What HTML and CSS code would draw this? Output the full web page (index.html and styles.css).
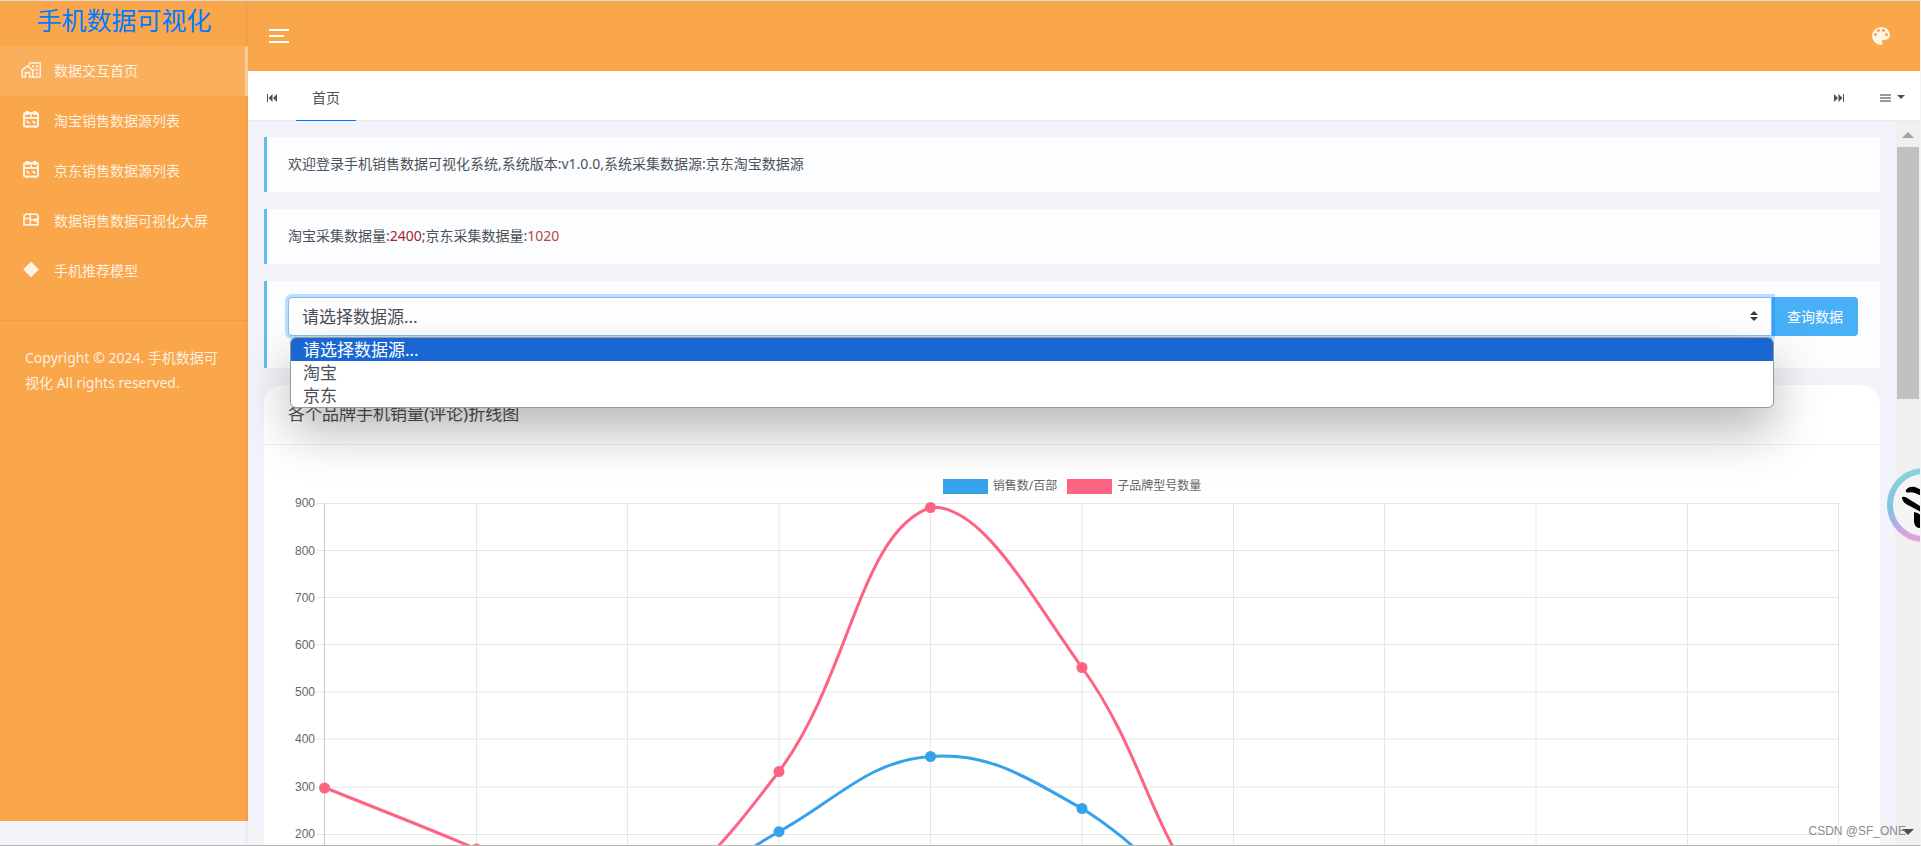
FILE: index.html
```html
<!DOCTYPE html>
<html lang="zh-CN">
<head>
<meta charset="utf-8">
<title>手机数据可视化</title>
<link rel="stylesheet" href="styles.css">
</head>
<body>
<div class="app">
  <aside class="sidebar">
    <a class="brand" href="#">手机数据可视化</a>
    <nav class="menu">
      <a class="menu-item active" href="#">
        <svg class="menu-icon" viewBox="0 0 20 20"><path d="M1.200 16V9.200L6.500 4.800l5.200 4.400V16H8.500v-4.500h-4V16z" fill="none" stroke="currentColor" stroke-width="1.600"/><path d="M8.500 4V2H19.200V16H12" fill="none" stroke="currentColor" stroke-width="1.500"/><path d="M11 4.200h2v2h-2zM14.800 4.200h2v2h-2zM14.800 7.800h2v2h-2zM14.800 11.400h2v2h-2zM12.500 7.800h1.200v2h-1.200z" fill="currentColor"/></svg>
        <span>数据交互首页</span>
      </a>
      <a class="menu-item" href="#">
        <svg class="menu-icon" viewBox="0 0 20 20"><rect x="3" y="2" width="14" height="13.500" rx="1.500" fill="none" stroke="currentColor" stroke-width="2"/><path d="M4.500 0h3.500v4H4.500zM12 0h3.500v4H12zM3 6h14v2H3zM9.200 2h1.600v5H9.200z" fill="currentColor"/><path d="M5.500 10l3 2.500M11.500 10l3 2.500M5 16h2.500M12.500 16H15" stroke="currentColor" stroke-width="1.700"/></svg>
        <span>淘宝销售数据源列表</span>
      </a>
      <a class="menu-item" href="#">
        <svg class="menu-icon" viewBox="0 0 20 20"><rect x="3" y="2" width="14" height="13.500" rx="1.500" fill="none" stroke="currentColor" stroke-width="2"/><path d="M4.500 0h3.500v4H4.500zM12 0h3.500v4H12zM3 6h14v2H3zM9.200 2h1.600v5H9.200z" fill="currentColor"/><path d="M5.500 10l3 2.500M11.500 10l3 2.500M5 16h2.500M12.500 16H15" stroke="currentColor" stroke-width="1.700"/></svg>
        <span>京东销售数据源列表</span>
      </a>
      <a class="menu-item" href="#">
        <svg class="menu-icon" viewBox="0 0 20 20"><path d="M4.800 3.200H15a2 2 0 0 1 2 2v8.600H3V5z" fill="none" stroke="currentColor" stroke-width="1.800"/><path d="M9.300 3v11M3 7.500h6M9.500 8.800h7.500" stroke="currentColor" stroke-width="1.500"/><path d="M12 8.500l3.500-1.500v5z" fill="currentColor"/></svg>
        <span>数据销售数据可视化大屏</span>
      </a>
      <a class="menu-item" href="#">
        <svg class="menu-icon" viewBox="0 0 20 20"><path d="M10 1.200L17.300 8.500 10 15.800 2.700 8.500z" fill="currentColor" stroke="currentColor" stroke-width="1" stroke-linejoin="round"/></svg>
        <span>手机推荐模型</span>
      </a>
    </nav>
    <p class="copyright">Copyright © 2024. 手机数据可视化 All rights reserved.</p>
  </aside>

  <div class="main">
    <header class="topbar">
      <button class="toggle" type="button" aria-label="菜单"><i></i><i class="short"></i><i></i></button>
      <button class="theme" type="button" aria-label="主题">
        <svg viewBox="3 3 18 18" width="18" height="18"><path fill="currentColor" d="M17.500 12a1.500 1.500 0 0 1-1.500-1.500A1.500 1.500 0 0 1 17.500 9a1.500 1.500 0 0 1 1.500 1.500 1.500 1.500 0 0 1-1.500 1.500m-3-4A1.500 1.500 0 0 1 13 6.500 1.500 1.500 0 0 1 14.500 5 1.500 1.500 0 0 1 16 6.500 1.500 1.500 0 0 1 14.500 8m-5 0A1.500 1.500 0 0 1 8 6.500 1.500 1.500 0 0 1 9.500 5 1.500 1.500 0 0 1 11 6.500 1.500 1.500 0 0 1 9.500 8m-3 4A1.500 1.500 0 0 1 5 10.500 1.500 1.500 0 0 1 6.500 9 1.500 1.500 0 0 1 8 10.500 1.500 1.500 0 0 1 6.500 12M12 3a9 9 0 0 0 0 18 1.500 1.500 0 0 0 1.500-1.500c0-.390-.150-.740-.390-1-.230-.270-.380-.620-.380-1a1.500 1.500 0 0 1 1.500-1.500H16a5 5 0 0 0 5-5c0-4.420-4.030-8-9-8z"/></svg>
      </button>
    </header>

    <div class="tabs">
      <button class="tab-btn" type="button" aria-label="向左"><svg width="10" height="8" viewBox="0 0 10 8"><path d="M0 0h1v8H0zM5.500 0v8L1.500 4zM10 0v8L6 4z" fill="currentColor"/></svg></button>
      <a class="tab" href="#">首页</a>
      <div class="tabs-right">
        <button class="tab-btn" type="button" aria-label="向右"><svg width="10" height="8" viewBox="0 0 10 8"><path d="M9 0h1v8H9zM4.500 0v8l4-4zM0 0v8l4-4z" fill="currentColor"/></svg></button>
        <button class="tab-btn more" type="button" aria-label="更多"><svg width="25" height="8" viewBox="0 0 25 8"><path d="M0 0h11v2H0zM0 3h11v2H0zM0 6h11v2H0z" fill="#989ba1"/><path d="M17 1h8l-4 4z" fill="currentColor"/></svg></button>
      </div>
    </div>

    <div class="viewport">
      <main class="content">
        <section class="quote">欢迎登录手机销售数据可视化系统,系统版本:v1.0.0,系统采集数据源:京东淘宝数据源</section>
        <section class="quote">淘宝采集数据量:<span class="num-a">2400</span>;京东采集数据量:<span class="num-b">1020</span></section>
        <section class="quote query">
          <form class="query-form">
            <div class="select-wrap">
              <select class="source" aria-label="数据源">
                <option>请选择数据源...</option>
                <option>淘宝</option>
                <option>京东</option>
              </select>
              <svg class="caret" width="8" height="10" viewBox="0 0 8 10"><path d="M0 4l4-4 4 4zM0 6h8l-4 4z" fill="#343a40"/></svg>
              <ul class="popup">
                <li class="chosen">请选择数据源...</li>
                <li>淘宝</li>
                <li>京东</li>
              </ul>
            </div>
            <button class="submit" type="button">查询数据</button>
          </form>
        </section>

        <section class="card">
          <h2 class="card-title">各个品牌手机销量(评论)折线图</h2>
          <div class="legend">
            <span class="key"><i class="swatch blue"></i>销售数/百部</span>
            <span class="key"><i class="swatch pink"></i>子品牌型号数量</span>
          </div>
          <svg class="chart" viewBox="264 495 1616 440">
            <path class="grid" d="M316 503.500H1839M316 550.500H1839M316 597.500H1839M316 644.500H1839M316 692H1839M316 739H1839M316 787H1839M316 834.500H1839M316 881.500H1839M316 929H1839"/>
            <path class="grid" d="M476.500 503V929M627.500 503V929M779 503V929M930.500 503V929M1082 503V929M1233.500 503V929M1384.500 503V929M1536 503V929M1687.500 503V929M1838.500 503V929"/>
            <path class="axis" d="M324.500 503V929"/>
            <g class="ticks">
              <text x="315" y="507">900</text><text x="315" y="555">800</text><text x="315" y="602">700</text>
              <text x="315" y="649">600</text><text x="315" y="696">500</text><text x="315" y="743">400</text>
              <text x="315" y="791">300</text><text x="315" y="838">200</text><text x="315" y="886">100</text>
            </g>
            <path class="line blue" d="M628 925C660 915 717 866 779 831.700C838 799 868 761 930.500 756.500C990 752 1027 778 1082 808.500C1146 848 1175 895 1233.500 925"/>
            <g class="dots blue"><circle cx="779" cy="831.700" r="5.500"/><circle cx="930.500" cy="756.500" r="5.500"/><circle cx="1082" cy="808.500" r="5.500"/></g>
            <path class="line pink" d="M324.500 787.500L416 824Q446 836 476.500 849C537 870 574 920 628 905C692 888 728 837 779 771.500C850.700 674.500 860 531.600 930.500 507.500C981.500 503.300 1030 595 1082 667.500C1151 763 1153 856 1233.500 925"/>
            <g class="dots pink"><circle cx="324.500" cy="788" r="5.500"/><circle cx="476.500" cy="849" r="5.500"/><circle cx="779" cy="771.500" r="5.500"/><circle cx="930.500" cy="507.500" r="5.500"/><circle cx="1082" cy="667.500" r="5.500"/></g>
          </svg>
        </section>
      </main>
      <div class="scrollbar">
        <svg width="12" height="6" viewBox="0 0 12 6"><path d="M0 6l6-6 6 6z" fill="#a3a3a3"/></svg>
        <div class="thumb"></div>
        <svg class="down" width="12" height="6" viewBox="0 0 12 6"><path d="M0 0h12L6 6z" fill="#505050"/></svg>
      </div>
    </div>
  </div>

  <svg class="float-badge" width="74" height="74" viewBox="0 0 74 74">
    <defs><linearGradient id="ring" x1="0" y1="0" x2="0" y2="1"><stop offset="0" stop-color="#8bd0dc"/><stop offset=".55" stop-color="#7fc4e2"/><stop offset=".8" stop-color="#b3aee8"/><stop offset="1" stop-color="#e6a3d8"/></linearGradient></defs>
    <circle cx="37" cy="37" r="34" fill="#f5f5f6" stroke="url(#ring)" stroke-width="6"/>
    <path d="M19 22q3-4 9-3l9 4v6l-9-4q-4-1-6-.500-4 0-3-2.500z" fill="#000"/>
    <path d="M15 29q3-1 6 1.500l13 8v5.500l-15-8q-4-3-4-7z" fill="#000"/>
    <path d="M27 44q6 1 8 5v11q-7 1-8-6z" fill="#000"/>
  </svg>
  <span class="watermark">CSDN @SF_ONE</span>
</div>
</body>
</html>
```
FILE: styles.css
```css
* { box-sizing: border-box; }

body {
  margin: 0;
  background: #f3f4fa;
  color: #4d5259;
  font: 14px/20px "Noto Sans", "Noto Sans CJK SC", sans-serif;
}

a { color: inherit; text-decoration: none; }
button { border: 0; padding: 0; background: none; color: inherit; font: inherit; }

.app {
  position: relative;
  display: flex;
  height: 100vh;
  overflow: hidden;
  border-top: 1px solid #ddd9d2;
  border-right: 1px solid #f5f5f5;
  border-bottom: 1px solid #b4b9ae;
}

.sidebar {
  flex: 0 0 248px;
  height: calc(100% - 24px);
  background: #faa64b;
  color: rgba(255, 255, 255, .85);
}

.brand {
  display: block;
  height: 45px;
  color: #007bff;
  font-size: 25px;
  line-height: 38px;
  text-align: center;
}

.menu { padding-bottom: 24px; border-bottom: 1px solid #f09f48; }

.menu-item {
  display: flex;
  align-items: center;
  gap: 13px;
  height: 50px;
  padding-left: 21px;
}

.menu-item.active {
  background: rgba(255, 255, 255, .1);
  border-right: 3px solid rgba(255, 255, 255, .4);
}

.menu-icon { width: 20px; height: 20px; }

.copyright {
  margin: 24px 25px;
  line-height: 25px;
}

.main {
  flex: 1;
  min-width: 0;
  display: flex;
  flex-direction: column;
  box-shadow: 0 0 6px rgba(0, 0, 0, .08);
}

.topbar {
  flex: 0 0 70px;
  display: flex;
  align-items: center;
  justify-content: space-between;
  padding: 0 30px 0 21px;
  background: #faa64b;
}

.toggle { display: grid; gap: 4px; }
.toggle i { width: 20px; height: 2px; background: #fff; }
.toggle .short { width: 15px; }
.theme { display: flex; color: rgba(255, 255, 255, .85); }

.tabs {
  flex: 0 0 50px;
  display: flex;
  align-items: stretch;
  background: #fff;
  border-bottom: 1px solid #e9eaef;
}

.tab-btn { display: flex; align-items: center; padding: 4px 19px 0 19px; }

.tab {
  padding: 4px 16px 0;
  margin-bottom: -1px;
  border-bottom: 1px solid #007bff;
  line-height: 45px;
}

.tabs-right { display: flex; margin-left: auto; }
.tab-btn.more { padding: 4px 15px 0 17px; }

.viewport { flex: 1; min-height: 0; display: flex; }
.content { flex: 1; min-width: 0; padding: 16px 15px 0 16px; overflow: hidden; }

.quote {
  margin-bottom: 17px;
  padding: 17px 22px 18px 21px;
  border-left: 3px solid #62bbf7;
  background: #fcfdff;
}

.num-a { color: #a5222b; }
.num-b { color: #b5473f; }

.query { padding: 16px 22px 32px 21px; }
.query-form { display: flex; }
.select-wrap { position: relative; z-index: 1; flex: 1; }

.source {
  display: block;
  width: 100%;
  height: 39px;
  padding: 0 13px;
  appearance: none;
  border: 1px solid #80bdff;
  border-radius: 4px 0 0 4px;
  outline: 0;
  background: #fff;
  box-shadow: 0 0 0 3px rgba(0, 123, 255, .25);
  color: #495057;
  font: inherit;
  font-size: 17px;
}

.caret { position: absolute; top: 14px; right: 14px; }

.popup {
  position: absolute;
  top: 40px;
  left: 2px;
  right: -2px;
  margin: 0;
  padding: 0;
  overflow: hidden;
  list-style: none;
  border: 1px solid #999;
  border-radius: 6px;
  background: #fff;
  box-shadow: 0 24px 50px rgba(0, 0, 0, .28);
  color: #495057;
  font-size: 17px;
  line-height: 23px;
}

.popup li { padding: 0 12px; }
.popup .chosen { background: #1967d2; color: #fff; }

.submit {
  flex: 0 0 86px;
  border-radius: 0 4px 4px 0;
  background: #48b0f7;
  color: #fff;
}

.card { border-radius: 20px; background: #fff; }

.card-title {
  margin: 0;
  padding: 17px 24px 18px;
  border-bottom: 1px solid #f0f1f2;
  font-size: 17px;
  font-weight: 400;
  line-height: 24px;
}

.legend {
  display: flex;
  justify-content: center;
  gap: 10px;
  padding-top: 32px;
  color: #666;
  font-size: 12px;
  line-height: 18px;
}

.key { display: flex; align-items: center; gap: 5px; }
.swatch { width: 45px; height: 15px; }
.swatch.blue { background: #36a2eb; }
.swatch.pink { background: #ff6384; }

.chart { display: block; width: 100%; }
.grid { stroke: #e6e6e6; }
.axis { stroke: #c8c8c8; }
.ticks { fill: #666; font: 12px "Liberation Sans", sans-serif; text-anchor: end; }
.line { fill: none; stroke-width: 3; }
.line.blue { stroke: #36a2eb; }
.line.pink { stroke: #ff6384; }
.dots.blue { fill: #36a2eb; }
.dots.pink { fill: #ff6384; }

.scrollbar {
  flex: 0 0 25px;
  display: flex;
  flex-direction: column;
  align-items: center;
  gap: 9px;
  padding: 11px 0 10px;
  background: #f0f0f0;
}

.thumb { width: 22px; height: 252px; background: #c1c1c1; }
.scrollbar .down { margin-top: auto; }

.float-badge { position: absolute; top: 467px; right: -41px; }

.watermark {
  position: absolute;
  right: 14px;
  bottom: 4px;
  color: #8a8a8a;
  font: 12px/20px "Liberation Sans", sans-serif;
}
```
